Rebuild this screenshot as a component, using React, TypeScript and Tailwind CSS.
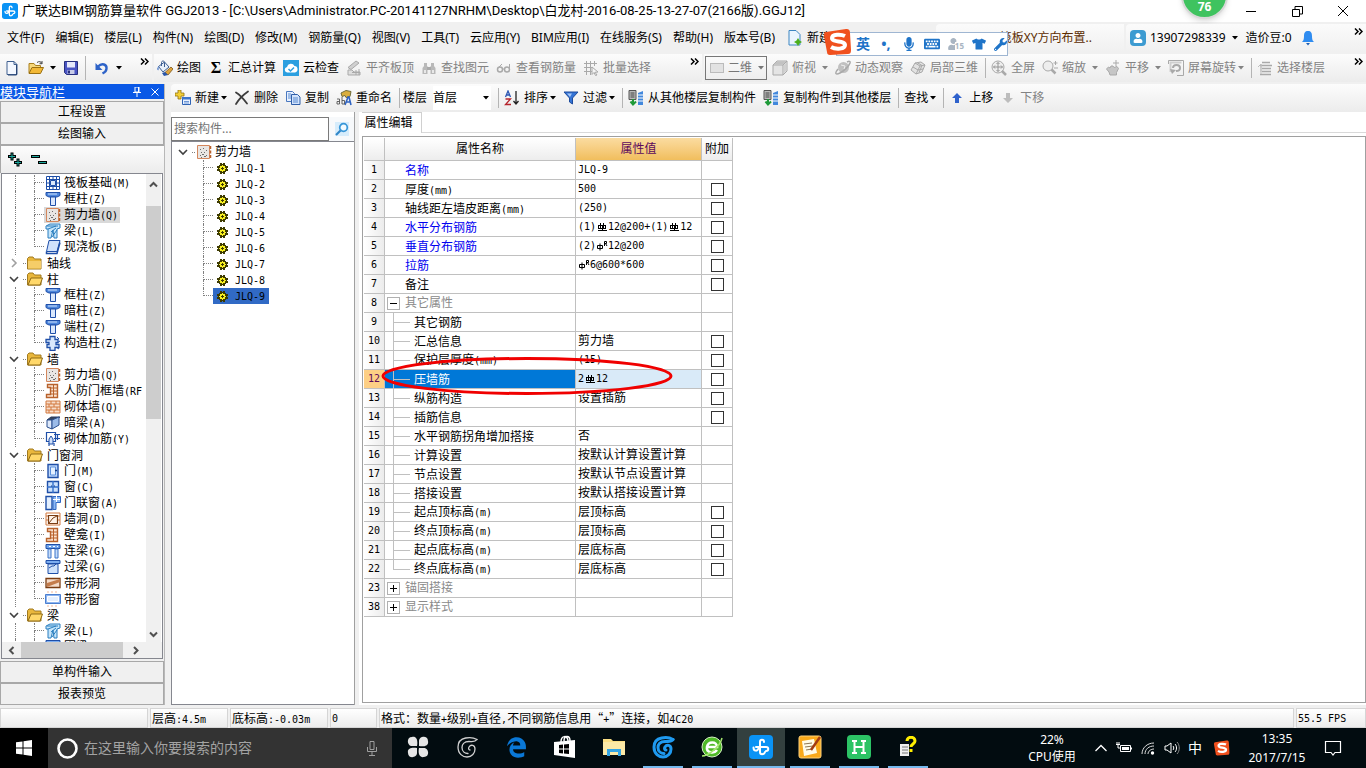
import React from "react";
import type { ReactNode } from "react";
import { FaKeyboard, FaMicrophone, FaTshirt, FaWrench, FaUser, FaEdgeLegacy } from "react-icons/fa";

/* ---------- text helpers ---------- */

// Song-style text: half-width characters take exactly half of a 12px ideograph.
function Song({ children }: { children: string }) {
  const runs = children.match(/[\x20-\x7e]+|[^\x20-\x7e]+/g) ?? [];
  return (
    <>
      {runs.map((run, i) =>
        /^[\x20-\x7e]/.test(run) ? (
          <span key={i} className="whitespace-pre font-['DejaVu_Sans_Mono','Noto_Sans_CJK_SC',monospace] text-[10px]">
            {run}
          </span>
        ) : (
          <span key={i} className="font-['Noto_Sans_CJK_SC',sans-serif]">{run}</span>
        )
      )}
    </>
  );
}

/* ---------- icons ---------- */

function Svg({ children, size = 16, box = 16 }: { children: ReactNode; size?: number; box?: number }) {
  return (
    <svg width={size} height={size} viewBox={`0 0 ${box} ${box}`} fill="none" className="shrink-0" aria-hidden="true">
      {children}
    </svg>
  );
}

const AppLogo = ({ size = 16 }: { size?: number }) => (
  <Svg size={size} box={24}>
    <rect width="24" height="24" rx="4" fill="#0a93f5" />
    <path d="M15 7c0-3-4-3-4 0v10c0 3 4 3 5 0M4.500 12.500c0 4 4 4 5 1M7 12h10c3 0 3 4 0 4" stroke="#fff" strokeWidth="2" strokeLinecap="round" />
  </Svg>
);
const NewDoc = () => (
  <Svg>
    <path d="M3 1.500h7l3 3v10H3z" fill="#f4f8ff" stroke="#3f5f8f" />
    <path d="M10 1.500v3h3" stroke="#3f5f8f" />
    <path d="M12.500 5v10H4" stroke="#2b4674" />
  </Svg>
);
const OpenFolder = () => (
  <Svg>
    <path d="M1 13V3.500h5l1.500 2h5V8" fill="#f6d77a" stroke="#a97f1d" />
    <path d="M1 13.500l3-6h11.500l-3 6z" fill="#f2b836" stroke="#9a7012" />
    <path d="M9 2.500c2-1.500 4-1 5 1m0-2.500v2.700h-2.500" stroke="#444" />
  </Svg>
);
const Save = () => (
  <Svg>
    <path d="M1.500 1.500h13v13h-11l-2-2z" fill="#4a55c4" stroke="#28307e" />
    <path d="M4 2h8v5.500H4z" fill="#e6e9fb" />
    <path d="M4.500 10h7v4h-7z" fill="#c9cde8" />
    <path d="M5 10.500h2v3H5z" fill="#28307e" />
  </Svg>
);
const Undo = () => (
  <Svg>
    <path d="M4 6.500c4-4 9-2 8.500 2 0 2.500-2 4-4 5" stroke="#2e63c8" strokeWidth="2.400" />
    <path d="M1.500 3v7h7z" fill="#2e63c8" />
  </Svg>
);
const Paint = () => (
  <Svg>
    <path d="M1.500 6.500l6-4.500 4.500 5-6 5z" fill="#e8f0fa" stroke="#3d5e92" />
    <path d="M4.500 6V2.500c0-2 3-2 3 0V7" stroke="#3d5e92" />
    <path d="M1.500 6C-.5 9 .5 11 1.500 10z" fill="#2d66c4" />
    <path d="M8 12.500L14 7l2 2-5 6z" fill="#e0a43a" stroke="#7a561a" strokeWidth=".8" />
    <path d="M5 13l3-1 3 3-4 1z" fill="#2a56a8" />
  </Svg>
);
const CloudCheck = () => (
  <Svg>
    <rect width="16" height="16" fill="#2b9fe0" />
    <path d="M4 12.500a2.800 2.800 0 010-5.500A4 4 0 0111.500 6a3.300 3.300 0 01.500 6.500z" fill="#fff" />
    <path d="M5.500 9l2 2 3.500-3.500" stroke="#2b9fe0" strokeWidth="1.500" />
  </Svg>
);
const G = "#a9a9a9";
const AlignTop = () => (
  <Svg>
    <path d="M2 7.500L10 1l3 2-8 6.500z" fill="#d0d0d0" stroke={G} />
    <path d="M2 10h4l2 2h6v3H2z" fill="#dedede" stroke={G} />
    <path d="M6 12.500h8M10 10v5M13 9v6" stroke={G} />
  </Svg>
);
const Binoculars = () => (
  <Svg>
    <path d="M3 3h3v3H3zM10 3h3v3h-3zM1.500 8L3 6h3.500v8h-5zM9.500 6H13l1.500 2v6h-5z" fill="#b9b9b9" />
    <path d="M6 7h4v3H6z" fill={G} />
    <path d="M3 10h2v3H3zM11 10h2v3h-2z" fill="#e8e8e8" />
  </Svg>
);
const Glasses = () => (
  <Svg>
    <circle cx="4" cy="9.500" r="2.500" stroke={G} strokeWidth="1.500" />
    <circle cx="11" cy="9.500" r="2.500" stroke={G} strokeWidth="1.500" />
    <path d="M6.500 9h2M2 8l4-4M13.500 9V4" stroke={G} />
  </Svg>
);
const BatchSelect = () => (
  <Svg>
    <path d="M1 3.500h13M1 7.500h8M1 11.500h8M3.500 1v14M7.500 1v14M11.500 1v5" stroke={G} />
    <path d="M9 7l6 5-3 .300L14 15l-1.500.500-1.500-3-2 2z" fill="#f5f5f5" stroke={G} />
  </Svg>
);
const CubeIcon = () => (
  <Svg>
    <path d="M1 5l4-4h10v10l-4 4H1z" fill="#e4e4e4" stroke={G} />
    <path d="M1 5h10v10M11 5l4-4" stroke={G} />
    <path d="M1.500 4.500L5 1.500h9l-3 3z" fill="#c2c2c2" />
    <path d="M11.500 5.500l3-3v8l-3 3z" fill="#d0d0d0" />
  </Svg>
);
const OrbitIcon = () => (
  <Svg>
    <circle cx="8.500" cy="7.500" r="5.500" fill="#c0c0c0" />
    <path d="M3 9C-1 14 1 15 5 13 9 11 14 6 15 3c.500-2-1-2-3-1" stroke={G} strokeWidth="1.500" />
    <path d="M6 5l4 1-1 3" stroke="#eee" />
  </Svg>
);
const LocalCube = () => (
  <Svg>
    <path d="M1 10L5 3l6-1 4 3-3 7-6 2z" fill="#e2e2e2" stroke={G} />
    <path d="M5 3l5 3 5-1M10 6l-4 8M3 7l5 3 5-1M7 2.500l5 3-3 7" stroke={G} />
  </Svg>
);
const ZoomAll = () => (
  <Svg>
    <circle cx="7" cy="7" r="6" fill="#eee" stroke={G} />
    <path d="M11 11l4 4" stroke={G} strokeWidth="2.500" />
    <path d="M7 2.500v9M2.500 7h9M5.500 4L7 2.500 8.500 4M5.500 10L7 11.500 8.500 10M4 5.500L2.500 7 4 8.500M10 5.500L11.500 7 10 8.500" stroke="#949494" />
  </Svg>
);
const ZoomIcon = () => (
  <Svg>
    <circle cx="6" cy="6" r="5" fill="#eee" stroke={G} />
    <path d="M9.500 9.500l4 4" stroke={G} strokeWidth="2.500" />
    <path d="M11.500 3h4M13.500 1v4M12 8h4" stroke={G} />
  </Svg>
);
const PanIcon = () => (
  <Svg>
    <path d="M1.500 9l2-2 1.500 1 1-2h2l1 1.500 3-1 1.500 2-2 4V15H5l-1-3z" fill="#c6c6c6" stroke={G} />
    <path d="M11 0v6M8 3h6" stroke={G} />
  </Svg>
);
const ScreenRotate = () => (
  <Svg>
    <path d="M.5 4V.5h15v15H9" stroke={G} />
    <path d="M2.500 12V2.500h11" stroke="#cfcfcf" strokeWidth="2" />
    <path d="M5 8c0-4 7-4 7 0 0 2-2 3-4 3" stroke={G} strokeWidth="2" />
    <path d="M2 9l2 5 4-4z" fill={G} />
  </Svg>
);
const FloorSelect = () => (
  <Svg>
    <path d="M5 2.500h8M3 5.500h12M5 8.500h9M5 11.500h9M3 14.500h11" stroke={G} strokeWidth="1.500" />
    <path d="M1 7l3-3v8M4 14V4" stroke="#bdbdbd" />
  </Svg>
);
const AddComp = () => (
  <Svg>
    <path d="M3 0h3v3h3v3H6v3H3V6H0V3h3z" fill="#f3cf36" stroke="#8f7112" strokeWidth=".8" />
    <path d="M7.500 7.500h8v7h-8z" fill="#eaf2ff" stroke="#2f63b5" />
    <path d="M7 7h9v2.500H7z" fill="#3b74cc" />
    <path d="M9 11.500h5M9 13h5" stroke="#6f98d6" />
  </Svg>
);
const DeleteX = () => (
  <Svg>
    <path d="M2 2.500c5 3 8 7 11 11M14 1.500C9 5 5 9 2 14" stroke="#3c3c3c" strokeWidth="1.800" strokeLinecap="round" />
  </Svg>
);
const CopyIcon = () => (
  <Svg>
    <path d="M1.500 1.500h6l2 2v8h-8z" fill="#e6f0ff" stroke="#4a78bf" />
    <path d="M6.500 4.500h6l2.500 2.500v7.500H6.500z" fill="#d2e3fc" stroke="#2f5ea8" />
    <path d="M8 8h5M8 10h5M8 12h5M3 4h3M3 6h3M3 8h3" stroke="#5b8bd0" />
  </Svg>
);
const RenameIcon = () => (
  <Svg>
    <path d="M5 3l5-2.500 5 1-1 5-4 1-1-2-3 1z" fill="#d9ae3f" stroke="#6f6c3c" />
    <path d="M9 15l3-8h1l2 8M10.500 12h4" stroke="#2f63c2" strokeWidth="1.600" />
    <path d="M1 9h2.500v5H1v-2.500h2.500M6 7v7h2.500v-3.500H6" stroke="#555" strokeWidth=".9" />
  </Svg>
);
const SortIcon = () => (
  <Svg>
    <path d="M1.500 7l2.500-6 2.500 6M2.500 5h3" stroke="#2b56b3" strokeWidth="1.300" />
    <path d="M1.500 9h5l-5 5.500h5.500" stroke="#b5242c" strokeWidth="1.300" />
    <path d="M12 1v13M9.500 11l2.500 3 2.500-3" stroke="#222" strokeWidth="1.300" />
  </Svg>
);
const FilterIcon = () => (
  <Svg>
    <path d="M1 2h14l-5.500 6v6l-3-2V8z" fill="#3474d6" stroke="#1d4b9c" />
    <path d="M4 3.500h5L7 7z" fill="#a9c9f7" />
  </Svg>
);
const FloorCopy = () => (
  <Svg>
    <path d="M1 .5h7v9H1z" fill="#b9b9b9" stroke="#555" />
    <path d="M2.500 3h4M2.500 5h4M2.500 7h4" stroke="#444" />
    <path d="M10 3l5-2v14h-5z" fill="#4288dc" />
    <path d="M10 5h5M10 8h5M10 11h5" stroke="#fff" />
    <path d="M5 9v5M2.500 11.500L5 14.500l3-3" stroke="#1e9a38" strokeWidth="2" />
  </Svg>
);
const Arrow = ({ up, color }: { up?: boolean; color: string }) => (
  <Svg>
    <path d={up ? "M8 3l5 5h-3v5H6V8H3z" : "M8 13l5-5h-3V3H6v5H3z"} fill={color} />
  </Svg>
);
const Caret = ({ tight }: { tight?: boolean }) => (
  <span className={tight ? "flex w-2 justify-end" : "flex w-3 justify-end"}>
    <svg width="6" height="4" viewBox="0 0 6 4" aria-hidden="true">
      <path d="M0 0h6L3 3.500z" fill="currentColor" />
    </svg>
  </span>
);
const More = () => (
  <button type="button" aria-label="更多" className="flex h-2 w-3 shrink-0 items-start text-black">
    <svg width="9" height="7" viewBox="0 0 9 7" fill="none" aria-hidden="true">
      <path d="M1 .5l3 3-3 3M5 .5l3 3-3 3" stroke="currentColor" strokeWidth="1.500" />
    </svg>
  </button>
);
const Sep = () => <span className="-mr-0.5 h-5 w-px shrink-0 bg-[#b4b4b4]" />;

/* ---------- tree icons ---------- */

const B = "#1f4fa8";
const O = "#b8622c";
const treeIcons: Record<string, ReactNode> = {
  raft: <Svg><path d="M1.500 1.500h13v13h-13zM4.500 1v14M8 1v14M11.500 1v14M1 4.500h14M1 8h14M1 11.500h14" stroke={B} /><path d="M5.500 5.500h5v5h-5z" fill="#dce9fb" stroke={B} /></Svg>,
  column: <Svg><path d="M1 1.500h14v3l-3 1.500H4L1 4.500z" fill="#4d86dc" stroke={B} /><path d="M5.500 6h5v8.500h-5z" fill="#dbe8fc" stroke={B} /><path d="M3 3h9" stroke="#cfe1fb" /></Svg>,
  wall: <Svg><path d="M1.500 1.500h12v13h-12z" fill="#e9e6e3" stroke="#d4875d" /><path d="M14.500 2v3M14.500 6.500v3M14.500 11v3" stroke={O} strokeWidth="1.500" /><path d="M4 5.500h1M7 4.500h1M10 6.500h1M5 8.500h1M8 8.500h1M4 11.500h1M6 10.500h2M10 11.500h1M5 13.500h1M8 12.500h2" stroke="#6c6c6c" /></Svg>,
  beam: <Svg><path d="M1 3l4-2h10v4l-3 1v9H9l-1-8-2 8H3V6H1z" fill="#c5e5fa" stroke="#2a7fc0" /><path d="M3 6l8-3M6 9l5-4M7 14l5-7M2 3h11" stroke="#2a7fc0" /></Svg>,
  slab: <Svg><path d="M4 1.500h11l-3 11H1.500z" fill="#cfe1fb" stroke={B} /><path d="M1.500 12.500v2H12l3-11" stroke={B} strokeWidth="1.500" /></Svg>,
  struct: <Svg><path d="M5 1.500h5v3h3v3h-2v2h3v3h-4v3H5v-3H2v-3h2v-2H1v-3h4z" fill="#d9e8fc" stroke={B} strokeWidth="1.300" /><path d="M12 2l2 2M12 8l3-2M11 12l3 2" stroke={B} /></Svg>,
  frame: <Svg><path d="M2.500 1.500h10v13h-11v-3h4v-7h-3z" fill="#fbe3d0" stroke={O} strokeWidth="1.400" /><path d="M8.500 2v12M5 5h7M5 8h7M5 11h7" stroke={O} /></Svg>,
  brick: <Svg><path d="M1 2h14v12H1z" fill="#f7ddcb" stroke="#d2793f" /><path d="M1 5h14M1 8h14M1 11h14M6 2v3M11 2v3M4 5v3M9 5v3M6 8v3M12 8v3M4 11v3M9 11v3" stroke="#d2793f" /></Svg>,
  hidden: <Svg><path d="M2 5l4-3h9l-4 3z" fill="#35455f" stroke="#2a3d61" /><path d="M2 5h5v9l-5-2z" fill="#dfeafb" stroke="#2a4f8e" /><path d="M7 5l7-3v8l-7 4z" fill="#9bbbe8" stroke="#2a4f8e" /></Svg>,
  rebar: <Svg><path d="M1.500 1.500h9v9h-9zM9 3.500h6M9 7.500h6M4 12v3M9 12v3M12.500 3v6" stroke={B} strokeWidth="1.200" /><path d="M4 8l2-3 2 3v5H4z" fill="#cfe1fb" stroke={B} /></Svg>,
  door: <Svg><path d="M3 1.500h10v13H3z" fill="#bcd6fa" stroke={B} strokeWidth="1.400" /><path d="M5.500 4h5v8h-5z" fill="#e4f0ff" stroke="#5a8fdc" /><path d="M10 7.500h2" stroke="#123a80" strokeWidth="1.500" /></Svg>,
  window: <Svg><path d="M2.500 2.500h11v11h-11z" fill="#cce2fd" stroke={B} strokeWidth="1.400" /><path d="M8 2v12M2 8h12" stroke="#3470ca" strokeWidth="1.400" /><path d="M6 7h1M9 7h1" stroke="#123a80" /></Svg>,
  doorwin: <Svg><path d="M1 1.500h6v13H1z" fill="#e4f0ff" stroke={B} strokeWidth="1.400" /><path d="M8 1.500h7.500v6H11v7H8z" fill="#8cb8f4" stroke="#2f68c4" /><path d="M8 4.500h7M11.500 1v6" stroke="#fff" /></Svg>,
  hole: <Svg><path d="M1 2h14v12H1zM1 5h3M1 9h3M12 5h3M12 9h3" stroke="#d2793f" /><path d="M3.500 4.500h9v8h-9z" fill="#fff3e8" stroke="#7a3c12" strokeWidth="1.200" /><path d="M4 12l4-5 4-2" stroke="#7a3c12" /></Svg>,
  link: <Svg><path d="M1 1.500h14v4H1z" fill="#6fa4ec" stroke={B} /><path d="M3 6h3v9H3zM10 6h3v9h-3z" fill="#c5dcfa" stroke="#3d74c9" /><path d="M4 3.500h2M8 3.500h2M12 3.500h1" stroke="#fff" /></Svg>,
  lintel: <Svg><path d="M1 1.500h14v3H1z" fill="#7cadf0" stroke={B} /><path d="M3 5h10v9.500H3z" fill="#cfe2fb" stroke={B} /><path d="M4 9l3-2h2l3-3" stroke={B} /></Svg>,
  striphole: <Svg><path d="M1 3.500h14v9H1z" fill="#f4dccb" stroke="#7a3c12" strokeWidth="1.300" /><path d="M2 8l13-4v3L2 12z" fill="#c37c4c" /></Svg>,
  stripwin: <Svg><path d="M.5 3.500h15v9H.5z" fill="#8db4ef" stroke="#4a7fd0" /><path d="M2.500 5.500h11v5h-11z" fill="#e4efff" stroke="#fff" /><path d="M2 1h12M2 15h12" stroke="#f2b99b" strokeDasharray="2 2" /></Svg>,
};
const Folder = ({ open }: { open?: boolean }) => (
  <Svg>
    <path d="M.5 14V3.500L2 2h4l1.500 2H14v10z" fill="#e9b73c" stroke="#a17a20" />
    {open ? <path d="M1 14l3-7h11.500L13 14z" fill="#ffd86a" stroke="#8f6a15" /> : <path d="M1 6h13v7.500H1z" fill="#f5cd68" />}
  </Svg>
);
const Gear = () => (
  <svg width="11" height="11" viewBox="0 0 11 11" shapeRendering="crispEdges" className="shrink-0" aria-hidden="true">
    <path d="M3 0h2v1h1V0h2v2h1v1h2v2h-1v1h1v2H9v1H8v2H6v-1H5v1H3V9H2V8H0V6h1V5H0V3h2V2h1z" fill="#3d3a00" />
    <path d="M3 3h2V2h1v1h2v2h1v1H8v2H6v1H5V8H3V6H2V5h1z" fill="#f8f020" />
    <path d="M5 4h1v1h1v1H6v1H5V6H4V5h1z" fill="#3d3a00" />
  </svg>
);
const Chevron = ({ open }: { open: boolean }) => (
  <svg width="10" height="10" viewBox="0 0 10 10" fill="none" aria-hidden="true">
    <path d={open ? "M1 3l4 4 4-4" : "M3 1l4 4-4 4"} stroke={open ? "#404040" : "#a0a0a0"} strokeWidth="1.600" />
  </svg>
);

/* ---------- title and menu ---------- */

function TitleBar() {
  return (
    <header className="relative flex h-[22px] shrink-0 items-center bg-white pl-0.5">
      <AppLogo />
      <h1 className="ml-1 font-['Roboto','Noto_Sans_CJK_SC',sans-serif] text-[13px] font-normal leading-5">
        广联达BIM钢筋算量软件 GGJ2013 - [C:\Users\Administrator.PC-20141127NRHM\Desktop\白龙村-2016-08-25-13-27-07(2166版).GGJ12]
      </h1>
      <div className="absolute -top-7 left-[1181px] flex h-[47px] w-[47px] items-end justify-center rounded-full border-2 border-[#d8d8d8] bg-[#3fc35f] pb-1 text-xs font-bold leading-3 text-white shadow-md">76</div>
      <div className="ml-auto flex">
        <button type="button" aria-label="最小化" className="flex h-5 w-[46px] items-center justify-center"><Svg size={10} box={10}><path d="M0 5.500h10" stroke="#000" /></Svg></button>
        <button type="button" aria-label="还原" className="flex h-5 w-[46px] items-center justify-center"><Svg size={11} box={11}><path d="M.5 3.500h7v7h-7zM3 3.500v-3h7.500V8H8" stroke="#000" /></Svg></button>
        <button type="button" aria-label="关闭" className="flex h-5 w-[46px] items-center justify-center"><Svg size={10} box={10}><path d="M0 0l10 10M10 0L0 10" stroke="#000" /></Svg></button>
      </div>
    </header>
  );
}

const menus = ["文件(F)", "编辑(E)", "楼层(L)", "构件(N)", "绘图(D)", "修改(M)", "钢筋量(Q)", "视图(V)", "工具(T)", "云应用(Y)", "BIM应用(I)", "在线服务(S)", "帮助(H)", "版本号(B)"];

function MenuBar() {
  return (
    <nav className="relative flex h-8 shrink-0 items-center pl-[7px]">
      <div className="flex gap-[11px]">
        {menus.map((m) => (
          <button key={m} type="button" className="leading-6">{m}</button>
        ))}
      </div>
      <button type="button" className="ml-3 flex items-center gap-1">
        <Svg><path d="M2 .5h7l4 4V15H2z" fill="#eaf5ff" stroke="#3c86c2" /><path d="M11 8l1.500 2.500L15 12l-2.500 1.500L11 16l-1.500-2.500L7 12l2.500-1.500z" fill="#4caf1e" /></Svg>
        新建
      </button>
      <div className="ml-auto flex h-7 w-[188px] items-center justify-end rounded-tl bg-gradient-to-b from-[#fbfbfb] to-[#f0f0f0] pr-8 text-[#5c2c00]">筏板XY方向布置..</div>
      <div className="ml-0.5 flex h-7 w-[240px] items-center rounded-tl bg-gradient-to-b from-[#fbfbfb] to-[#f0f0f0] pl-1">
        <span className="flex h-4 w-4 items-center justify-center rounded-sm bg-[#3d9bd1] text-white"><FaUser size={10} /></span>
        <button type="button" className="ml-1 flex items-center">13907298339<Caret /></button>
        <span className="ml-2">造价豆:0</span>
        <span className="ml-2"><Svg><path d="M8 1c-3 0-4 2-4 5 0 4-1 5-2 6h12c-1-1-2-2-2-6 0-3-1-5-4-5z" fill="#2f8cf0" /><path d="M6 13h4l-2 2.500z" fill="#1b5fb5" /></Svg></span>
        <span className="ml-auto self-start pt-1"><More /></span>
      </div>
      <div className="absolute left-[824px] top-1.5 flex h-8 items-center" aria-label="输入法">
        <div className="ml-3 flex h-6 w-[172px] items-center gap-2 border border-[#9fb6d2] bg-white pl-[19px] text-[#1f74c8]">
          <b className="text-sm">英</b>
          <b className="w-4 text-center text-sm">•,</b>
          <FaMicrophone size={14} />
          <FaKeyboard size={16} />
          <span className="flex w-4 items-end text-[#a9b5c2]"><FaUser size={12} /><b className="-ml-1 bg-white text-[8px] leading-2">15</b></span>
          <FaTshirt size={14} />
          <FaWrench size={13} />
        </div>
        <div className="absolute left-0 top-0"><SLogo size={28} /></div>
      </div>
    </nav>
  );
}

const SLogo = ({ size }: { size: number }) => (
  <Svg size={size} box={28}>
    <path d="M2 4l20-3c3 0 4 1 4 4l1 17c0 3-1 4-3 4L6 27c-2 0-3-1-3-3L0 8c0-2 0-4 2-4z" fill="#f0501e" />
    <path d="M21 8c-4-2-13-2-13 2 0 5 13 2 13 7 0 4-9 5-14 2" stroke="#fff" strokeWidth="4" />
  </Svg>
);

/* ---------- toolbars ---------- */

function Tool({ icon, label, caret, off }: { icon?: ReactNode; label: string; caret?: "wide" | "tight"; off?: boolean }) {
  return (
    <button type="button" disabled={off} className={off ? "flex shrink-0 items-center text-[#838383]" : "flex shrink-0 items-center text-black"}>
      {icon && <span className="mr-1 flex w-4 justify-center">{icon}</span>}
      {label}
      {caret && <Caret tight={caret === "tight"} />}
    </button>
  );
}

const barCls = "bg-gradient-to-b from-[#fcfcfc] to-[#ececec]";

function ToolbarMain() {
  return (
    <div className="flex h-7 shrink-0 gap-0.5">
      <div className={`flex w-[152px] shrink-0 items-center pl-1 ${barCls}`}>
        <button type="button" aria-label="新建"><NewDoc /></button>
        <button type="button" aria-label="打开" className="ml-2 flex items-center"><OpenFolder /><Caret /></button>
        <button type="button" aria-label="保存" className="ml-[7px]"><Save /></button>
        <span className="ml-1.5 h-6 w-px bg-[#b4b4b4]" />
        <button type="button" aria-label="撤销" className="ml-2 flex items-center"><Undo /><Caret /></button>
        <span className="ml-auto self-start pt-1"><More /></span>
      </div>
      <div className={`flex w-[548px] shrink-0 items-center gap-[7px] pl-[3px] ${barCls}`}>
        <Tool icon={<Paint />} label="绘图" />
        <Tool icon={<b className="font-['Liberation_Serif',serif] text-base leading-4">Σ</b>} label="汇总计算" />
        <Tool icon={<CloudCheck />} label="云检查" />
        <Tool off icon={<AlignTop />} label="平齐板顶" />
        <Tool off icon={<Binoculars />} label="查找图元" />
        <Tool off icon={<Glasses />} label="查看钢筋量" />
        <Tool off icon={<BatchSelect />} label="批量选择" />
        <span className="ml-auto self-start pt-1"><More /></span>
      </div>
      <div className={`flex min-w-0 flex-1 items-center gap-[7px] pl-px ${barCls}`}>
        <label className="-mr-0.5 flex h-6 w-[62px] shrink-0 items-center border border-[#777] pl-1 text-[#777]">
          <span className="mr-1 h-2.5 w-3.5 border border-[#bbb] bg-[#e2e2e2]" />
          <select aria-label="视图维度" className="w-6 appearance-none bg-transparent"><option>二维</option></select>
          <Caret />
        </label>
        <Tool off icon={<CubeIcon />} label="俯视" caret="wide" />
        <Tool off icon={<OrbitIcon />} label="动态观察" />
        <Tool off icon={<LocalCube />} label="局部三维" />
        <Sep />
        <Tool off icon={<ZoomAll />} label="全屏" />
        <Tool off icon={<ZoomIcon />} label="缩放" caret="wide" />
        <Tool off icon={<PanIcon />} label="平移" caret="wide" />
        <Tool off icon={<ScreenRotate />} label="屏幕旋转" caret="tight" />
        <Sep />
        <Tool off icon={<FloorSelect />} label="选择楼层" />
        <span className="ml-auto self-start pt-1"><More /></span>
      </div>
    </div>
  );
}

function ToolbarComponent() {
  return (
    <div className={`flex h-7 shrink-0 items-center gap-[7px] rounded-tl pl-1 ${barCls}`}>
      <Tool icon={<AddComp />} label="新建" caret="tight" />
      <Tool icon={<DeleteX />} label="删除" />
      <Tool icon={<CopyIcon />} label="复制" />
      <Tool icon={<RenameIcon />} label="重命名" />
      <Sep />
      <label className="-ml-0.5 flex items-center gap-1.5">
        楼层
        <span className="flex h-6 w-[58px] items-center bg-white">
          <select aria-label="楼层" className="w-11 appearance-none bg-transparent"><option>首层</option></select>
          <Caret />
        </span>
      </label>
      <Sep />
      <Tool icon={<SortIcon />} label="排序" caret="tight" />
      <Tool icon={<FilterIcon />} label="过滤" caret="tight" />
      <Sep />
      <Tool icon={<FloorCopy />} label="从其他楼层复制构件" />
      <Tool icon={<FloorCopy />} label="复制构件到其他楼层" />
      <Sep />
      <Tool label="查找" caret="tight" />
      <Sep />
      <Tool icon={<Arrow up color="#2f62cc" />} label="上移" />
      <Tool off icon={<Arrow color="#bdbdbd" />} label="下移" />
    </div>
  );
}

/* ---------- left navigation ---------- */

type Node = { label: string; icon?: string; open?: boolean; last?: boolean; active?: boolean };
const nodes: Node[] = [
  { label: "筏板基础(M)", icon: "raft" },
  { label: "框柱(Z)", icon: "column" },
  { label: "剪力墙(Q)", icon: "wall", active: true },
  { label: "梁(L)", icon: "beam" },
  { label: "现浇板(B)", icon: "slab", last: true },
  { label: "轴线", open: false },
  { label: "柱", open: true },
  { label: "框柱(Z)", icon: "column" },
  { label: "暗柱(Z)", icon: "column" },
  { label: "端柱(Z)", icon: "column" },
  { label: "构造柱(Z)", icon: "struct", last: true },
  { label: "墙", open: true },
  { label: "剪力墙(Q)", icon: "wall" },
  { label: "人防门框墙(RF", icon: "frame" },
  { label: "砌体墙(Q)", icon: "brick" },
  { label: "暗梁(A)", icon: "hidden" },
  { label: "砌体加筋(Y)", icon: "rebar", last: true },
  { label: "门窗洞", open: true },
  { label: "门(M)", icon: "door" },
  { label: "窗(C)", icon: "window" },
  { label: "门联窗(A)", icon: "doorwin" },
  { label: "墙洞(D)", icon: "hole" },
  { label: "壁龛(I)", icon: "frame" },
  { label: "连梁(G)", icon: "link" },
  { label: "过梁(G)", icon: "lintel" },
  { label: "带形洞", icon: "striphole" },
  { label: "带形窗", icon: "stripwin", last: true },
  { label: "梁", open: true },
  { label: "梁(L)", icon: "beam" },
  { label: "圈梁(E)", icon: "lintel" },
];

const Branch = ({ last }: { last?: boolean }) => (
  <span className="flex h-4 w-2.5 shrink-0 flex-col">
    <span className="h-2 border-b border-l border-dotted border-[#808080]" />
    <span className={last ? "h-2" : "h-2 border-l border-dotted border-[#808080]"} />
  </span>
);

function NavTree() {
  return (
    <ul className="min-w-0 flex-1 overflow-hidden pt-px">
      {nodes.map((n, i) =>
        n.icon ? (
          <li key={i} className="flex h-4 items-center whitespace-nowrap">
            <span className="ml-[13px] h-4 w-[19px] shrink-0 border-l border-dotted border-[#808080]" />
            <Branch last={n.last} />
            <span className={n.active ? "flex h-4 items-center gap-px bg-[#d9d9d9] pl-px" : "flex h-4 items-center gap-px pl-px"}>
              {treeIcons[n.icon]}
              <span className="px-0.5 leading-4"><Song>{n.label}</Song></span>
            </span>
          </li>
        ) : (
          <li key={i} className="flex h-4 items-center whitespace-nowrap pl-[7px]">
            <button type="button" aria-label={n.label} aria-expanded={n.open}><Chevron open={!!n.open} /></button>
            <span className="ml-1 mr-px h-px w-[3px] border-b border-dotted border-[#808080]" />
            <Folder open={n.open} />
            <span className="ml-1 leading-4"><Song>{n.label}</Song></span>
          </li>
        )
      )}
    </ul>
  );
}

const ScrollArrow = ({ d }: { d: string }) => (
  <svg width="9" height="9" viewBox="0 0 9 9" fill="none" aria-hidden="true"><path d={d} stroke="#505050" strokeWidth="2" /></svg>
);

const navBtn = "h-[22px] shrink-0 border border-[#a8a8a8] bg-[#f0f0f0] leading-5";

function NavPanel() {
  return (
    <aside className="flex w-[165px] shrink-0 flex-col border-r border-[#b8b8b8]">
      <div className="mb-0.5 flex h-[15px] shrink-0 items-center bg-[#0a58e6] pr-1 text-[13px] leading-4 text-white">
        <h2>模块导航栏</h2>
        <button type="button" aria-label="固定" className="ml-auto"><Svg size={10} box={10}><path d="M3 0h4v5H3zM1 5.500h8M5 6v4M6.500 0v5" stroke="#fff" /></Svg></button>
        <button type="button" aria-label="关闭" className="ml-2"><Svg size={10} box={10}><path d="M1.500 1.500l7 7M8.500 1.500l-7 7" stroke="#fff" /></Svg></button>
      </div>
      <button type="button" className={navBtn}>工程设置</button>
      <button type="button" className={navBtn}>绘图输入</button>
      <div className={`flex h-7 shrink-0 items-center gap-2 border-l border-t border-[#a8a8a8] pl-1.5 ${barCls}`}>
        <button type="button" aria-label="全部展开"><Svg><path d="M1 4.500h8M5 .5v8M7 10.500h8M11 6.500v8" stroke="#000" strokeWidth="3" /><path d="M2 4.500h6M5 1.500v6M8 10.500h6M11 7.500v6" stroke="#1aa79c" /></Svg></button>
        <button type="button" aria-label="全部折叠"><Svg><path d="M0 4.500h9M7 10.500h9" stroke="#000" strokeWidth="3" /><path d="M1 4.500h7M8 10.500h7" stroke="#1aa79c" /></Svg></button>
      </div>
      <div className="mx-px flex min-h-0 flex-1 flex-col border border-[#85878f] bg-white">
        <div className="flex min-h-0 flex-1">
          <NavTree />
          <div className="mr-px flex w-[15px] shrink-0 flex-col items-center bg-[#f0f0f0]">
            <span className="flex h-8 items-center pb-3"><ScrollArrow d="M1 6.500L4.500 3 8 6.500" /></span>
            <span className="h-[213px] w-full bg-[#cdcdcd]" />
            <span className="mt-auto flex h-4 items-center"><ScrollArrow d="M1 2.500L4.500 6 8 2.500" /></span>
          </div>
        </div>
        <div className="flex h-4 shrink-0 items-center bg-[#f0f0f0]">
          <span className="flex w-[19px] justify-center"><ScrollArrow d="M6.500 1L3 4.500 6.500 8" /></span>
          <span className="h-4 w-[102px] bg-[#cdcdcd]" />
          <span className="ml-2"><ScrollArrow d="M3 1l3.500 3.500L3 8" /></span>
        </div>
      </div>
      <button type="button" className={`mt-0.5 ${navBtn}`}>单构件输入</button>
      <button type="button" className={navBtn}>报表预览</button>
    </aside>
  );
}

/* ---------- component list ---------- */

const comps = ["JLQ-1", "JLQ-2", "JLQ-3", "JLQ-4", "JLQ-5", "JLQ-6", "JLQ-7", "JLQ-8", "JLQ-9"];

function ComponentList() {
  return (
    <section className="flex w-[184px] shrink-0 flex-col border-r border-[#a0a0a0] bg-white">
      <div className="mt-[5px] flex h-6 shrink-0">
        <input type="search" aria-label="搜索构件" placeholder="搜索构件..." className="w-[158px] border border-[#7a7a7a] px-0.5 placeholder:text-[#757575]" />
        <button type="button" aria-label="搜索" className="flex flex-1 items-center justify-center bg-[#f7f9fb]">
          <Svg><rect x="1" y="1" width="14" height="14" fill="#d6ecfb" /><circle cx="9.500" cy="6.500" r="3.800" fill="#f2faff" stroke="#3796d8" strokeWidth="1.700" /><path d="M6.500 9.500L2 14" stroke="#2f86c8" strokeWidth="2.200" /></Svg>
        </button>
      </div>
      <div className="flex-1 border border-r-0 border-[#85878f]">
        <div className="mt-0.5 flex h-4 items-center pl-1.5">
          <button type="button" aria-label="剪力墙" aria-expanded="true"><Chevron open /></button>
          <span className="ml-1 mr-px h-px w-[3px] border-b border-dotted border-[#808080]" />
          {treeIcons.wall}
          <span className="ml-[3px] leading-4">剪力墙</span>
        </div>
        <ul>
          {comps.map((c, i) => (
            <li key={c} className="flex h-4 items-center pl-[31px]">
              <Branch last={i === comps.length - 1} />
              <span className={i === 8 ? "flex h-4 items-center gap-[7px] bg-[#316ac5] px-1" : "flex h-4 items-center gap-[7px] px-1"}>
                <Gear />
                <span className="leading-4"><Song>{c}</Song></span>
              </span>
            </li>
          ))}
        </ul>
      </div>
    </section>
  );
}

/* ---------- property table ---------- */

const RebarC = () => (
  <svg width="12" height="10" viewBox="0 0 12 10" fill="none" role="img" aria-label="三级钢" shapeRendering="crispEdges" className="shrink-0">
    <path d="M2.500 3.500h7v3h-7zM4.500 1v6M7.500 1v6M6 3v6M1.500 8.500h9" stroke="currentColor" />
  </svg>
);
const RebarR = () => (
  <svg width="12" height="12" viewBox="0 0 12 12" fill="none" role="img" aria-label="冷轧带肋钢" className="shrink-0">
    <path d="M1.500 5.500h5v3h-5zM4 3.500v7" stroke="currentColor" />
    <path d="M8.500 6V1.500h2v2h-2M9.500 3.500L11 6" stroke="currentColor" />
  </svg>
);

type Row = { n: number; name: string; value?: ReactNode; check?: boolean; kind?: "blue" | "plus" | "minus" | "child" };
const rows: Row[] = [
  { n: 1, name: "名称", value: <Song>JLQ-9</Song>, kind: "blue" },
  { n: 2, name: "厚度(mm)", value: <Song>500</Song>, check: true },
  { n: 3, name: "轴线距左墙皮距离(mm)", value: <Song>(250)</Song>, check: true },
  { n: 4, name: "水平分布钢筋", value: <><Song>(1)</Song><RebarC /><Song>12@200+(1)</Song><RebarC /><Song>12</Song></>, check: true, kind: "blue" },
  { n: 5, name: "垂直分布钢筋", value: <><Song>(2)</Song><RebarR /><Song>12@200</Song></>, check: true, kind: "blue" },
  { n: 6, name: "拉筋", value: <><RebarR /><Song>6@600*600</Song></>, check: true, kind: "blue" },
  { n: 7, name: "备注", check: true },
  { n: 8, name: "其它属性", kind: "minus" },
  { n: 9, name: "其它钢筋", kind: "child" },
  { n: 10, name: "汇总信息", value: "剪力墙", check: true, kind: "child" },
  { n: 11, name: "保护层厚度(mm)", value: <Song>(15)</Song>, check: true, kind: "child" },
  { n: 12, name: "压墙筋", value: <><Song>2</Song><RebarC /><Song>12</Song></>, check: true, kind: "child" },
  { n: 13, name: "纵筋构造", value: "设置插筋", check: true, kind: "child" },
  { n: 14, name: "插筋信息", check: true, kind: "child" },
  { n: 15, name: "水平钢筋拐角增加搭接", value: "否", kind: "child" },
  { n: 16, name: "计算设置", value: "按默认计算设置计算", kind: "child" },
  { n: 17, name: "节点设置", value: "按默认节点设置计算", kind: "child" },
  { n: 18, name: "搭接设置", value: "按默认搭接设置计算", kind: "child" },
  { n: 19, name: "起点顶标高(m)", value: "层顶标高", check: true, kind: "child" },
  { n: 20, name: "终点顶标高(m)", value: "层顶标高", check: true, kind: "child" },
  { n: 21, name: "起点底标高(m)", value: "层底标高", check: true, kind: "child" },
  { n: 22, name: "终点底标高(m)", value: "层底标高", check: true, kind: "child" },
  { n: 23, name: "锚固搭接", kind: "plus" },
  { n: 38, name: "显示样式", kind: "plus" },
];

const line = "border-b border-r border-[#c0c0c0]";

function NameCell({ row }: { row: Row }) {
  if (row.kind === "child") {
    return (
      <div className="flex h-[18px] items-center">
        <span className="ml-2 flex h-[18px] w-[17px] shrink-0 flex-col self-start">
          <span className="h-[10px] border-b border-l border-[#c0c0c0]" />
          <span className={row.n === 22 ? "h-2" : "h-2 border-l border-[#c0c0c0]"} />
        </span>
        <span className="ml-1 leading-[18px]"><Song>{row.name}</Song></span>
      </div>
    );
  }
  if (row.kind === "plus" || row.kind === "minus") {
    return (
      <div className="flex h-[18px] items-center pl-0.5 text-[#8a8a8a]">
        <button type="button" aria-label={row.name} className="mr-[5px] flex h-[13px] w-[13px] items-center justify-center border border-[#b0b0b0] text-black">
          <Svg size={7} box={7}><path d={row.kind === "plus" ? "M0 3.500h7M3.500 0v7" : "M0 3.500h7"} stroke="currentColor" /></Svg>
        </button>
        <span className="leading-[18px]">{row.name}</span>
      </div>
    );
  }
  return (
    <div className={row.kind === "blue" ? "h-[18px] pl-5 leading-[18px] text-[#0000f0]" : "h-[18px] pl-5 leading-[18px]"}>
      <Song>{row.name}</Song>
    </div>
  );
}

function PropertyTable() {
  return (
    <div className="relative w-[369px]">
      <table className="w-full table-fixed border-separate border-spacing-0">
        <colgroup>
          <col className="w-[21px]" />
          <col className="w-[191px]" />
          <col className="w-[126px]" />
          <col className="w-[31px]" />
        </colgroup>
        <thead>
          <tr className="h-[23px] bg-gradient-to-b from-white to-[#ececec]">
            <th className={`p-0 ${line}`} />
            <th className={`p-0 font-normal ${line}`}>属性名称</th>
            <th className={`bg-gradient-to-b from-[#fbdca0] to-[#f1be5c] p-0 font-normal text-[#5c0a5c] ${line}`}>属性值</th>
            <th className={`p-0 font-normal ${line}`}>附加</th>
          </tr>
        </thead>
        <tbody>
          {rows.map((r) => {
            const sel = r.n === 12;
            return (
              <tr key={r.n} className="h-[19px]">
                <th scope="row" className={`p-0 font-normal ${sel ? "bg-[#fdcf85] text-[#5c0a5c]" : "bg-gradient-to-r from-white to-[#ececec]"} ${line}`}>
                  <div className="flex h-[18px] items-center justify-center"><Song>{String(r.n)}</Song></div>
                </th>
                <td className={`p-0 ${sel ? "bg-[#0078d7] text-white" : ""} ${line}`}><NameCell row={r} /></td>
                <td className={`p-0 ${sel ? "bg-[#d9eaf8]" : ""} ${line}`}>
                  <div className="flex h-[18px] items-center whitespace-nowrap pl-0.5">{r.value}</div>
                </td>
                <td className={`p-0 ${line}`}>
                  {r.check && <input type="checkbox" aria-label={`附加 ${r.name}`} className="mx-auto block h-[13px] w-[13px] appearance-none border border-[#333] bg-white" />}
                </td>
              </tr>
            );
          })}
        </tbody>
      </table>
      <svg width="292" height="40" viewBox="0 0 292 40" fill="none" className="pointer-events-none absolute left-[17px] top-[218px]" aria-hidden="true">
        <ellipse cx="146" cy="20" rx="144" ry="17.500" stroke="#f00000" strokeWidth="3" />
      </svg>
    </div>
  );
}

function PropertyEditor() {
  return (
    <section className="ml-1 flex min-w-0 flex-1 flex-col bg-white pl-[3px]">
      <div className="flex h-[21px] shrink-0 items-end" role="tablist">
        <button type="button" role="tab" aria-selected="true" className="h-[21px] w-[60px] border-r border-t border-[#d0d0d0] pr-1.5 leading-5">属性编辑</button>
        <span className="flex-1 border-b border-[#d9d9d9]" />
      </div>
      <div className="mb-0.5 mt-[3px] flex-1 border border-[#a0a0a0] pl-px pt-px">
        <PropertyTable />
      </div>
    </section>
  );
}

/* ---------- status bar and task bar ---------- */

const cell = "border border-[#d5d5d5] bg-gradient-to-b from-white to-[#ececec] pl-px leading-[18px]";

function StatusBar() {
  return (
    <footer className="flex h-[20px] shrink-0 gap-0.5">
      <div className={`w-[148px] ${cell}`} />
      <div className={`w-[78px] ${cell}`}><Song>层高:4.5m</Song></div>
      <div className={`w-[98px] ${cell}`}><Song>底标高:-0.03m</Song></div>
      <div className={`w-[47px] ${cell}`}><Song>0</Song></div>
      <div className={`min-w-0 flex-1 ${cell}`}><Song>{"格式：数量+级别+直径,不同钢筋信息用“+”连接，如4C20"}</Song></div>
      <div className={`w-[70px] ${cell}`}><Song>55.5 FPS</Song></div>
    </footer>
  );
}

const GSwirl = ({ color, w }: { color: string; w: number }) => (
  <Svg size={24} box={24}>
    <path d="M22 4.500C17 1.500 3 1 3 12c0 7 5 10 9 10 5 0 8-4 8-8 0-4-4-5-6-2-1 2 0 3 1 3" stroke={color} strokeWidth={w} strokeLinecap="round" />
    <path d="M22 4.500c-2 3-5 2-8 2-5 0-7 3-7 6 0 4 3 6 6 6" stroke={color} strokeWidth={w} strokeLinecap="round" />
  </Svg>
);

const apps: { name: string; icon: ReactNode; run?: boolean; active?: boolean }[] = [
  { name: "四叶草", icon: <Svg size={22} box={22}><path d="M10 10H5C0 10-1 1 5 1c5-1 6 4 5 9zM12 10V5c0-5 9-6 9 0 1 5-4 6-9 5zM12 12h5c5 0 6 9 0 9-5 1-6-4-5-9zM10 12v5c0 5-9 6-9 0-1-5 4-6 9-5z" fill="#e6e6e6" /></Svg> },
  { name: "浏览器G", icon: <GSwirl color="#d0d0d0" w={1.3} /> },
  { name: "Edge", icon: <FaEdgeLegacy size={21} color="#0a78d7" /> },
  { name: "应用商店", icon: <Svg size={24} box={24}><path d="M1 7l21-2v18L1 20z" fill="#fff" /><path d="M8 7c0-7 7-7 7-1M11 6c0-6 6-6 6 0" stroke="#fff" strokeWidth="1.500" /><path d="M6 10l4-.500v4H6zM11 9.500l5-.500v4.500h-5zM6 14.500h4v4l-4-.500zM11 14.500h5V19l-5-.500z" fill="#000" /></Svg> },
  { name: "文件资源管理器", icon: <Svg size={24} box={24}><path d="M1 4h8l2 2h12v14H1z" fill="#fbdf84" /><path d="M1 7h22v13H1z" fill="#fce9a6" /><path d="M5 21v-7h14v7h-3v-4H8v4z" fill="#33a4e4" /></Svg> },
  { name: "广联达", run: true, icon: <GSwirl color="#1f9af0" w={3} /> },
  { name: "浏览器", run: true, icon: <Svg size={24} box={24}><circle cx="12" cy="12" r="10" fill="#4fb928" stroke="#d6f0c4" /><path d="M7 12h10c0-6-9-6-10 0s7 7 10 3" stroke="#fff" strokeWidth="2.600" /><path d="M2 21C8 21 20 12 22 3" stroke="#a5e66f" strokeWidth="1.500" /></Svg> },
  { name: "钢筋算量", run: true, active: true, icon: <AppLogo size={24} /> },
  { name: "记事", run: true, icon: <Svg size={24} box={24}><rect x="1" y="1" width="22" height="22" rx="2" fill="#f9a91b" stroke="#ffd27c" /><path d="M4 6l12-2 3 14-13 3z" fill="#fffbe8" /><path d="M6 9l8-1M7 12l8-1M8 15l6-1" stroke="#8d7755" /><path d="M22 2l-9 13" stroke="#a33b12" strokeWidth="2.500" /></Svg> },
  { name: "绿色H", run: true, icon: <Svg size={24} box={24}><rect width="24" height="24" rx="4" fill="#2cc365" /><path d="M5 6h5M7.500 6v12M5 18h5M14 6h5M16.500 6v12M14 18h5M8 12h8" stroke="#fff" strokeWidth="2" /></Svg> },
  { name: "帮助", run: true, icon: <Svg size={22} box={22}><path d="M3 8h9v12H3z" fill="#eee" /><path d="M5 11h6M5 14h6M5 17h6" stroke="#777" /><path d="M10 5c0-5 8-5 8 0 0 3-4 3-4 6M14 13v3" stroke="#ffee00" strokeWidth="3" /></Svg> },
];

function TaskBar() {
  return (
    <div className="flex h-10 shrink-0 items-center bg-[#020c10] text-white">
      <button type="button" aria-label="开始" className="flex h-10 w-12 items-center justify-center bg-black">
        <Svg><path d="M0 2.300L6.500 1.400v6.100H0zM7.500 1.200L16 0v7.500H7.500zM0 8.500h6.500v6.100L0 13.700zM7.500 8.500H16V16l-8.500-1.200z" fill="#fff" /></Svg>
      </button>
      <label className="flex h-10 w-[344px] items-center bg-[#333] pl-2 pr-3">
        <Svg size={23} box={23}><circle cx="11.500" cy="11.500" r="9" stroke="#fff" strokeWidth="2.600" /></Svg>
        <input type="text" placeholder="在这里输入你要搜索的内容" aria-label="搜索" className="ml-[5px] min-w-0 flex-1 bg-transparent text-sm placeholder:text-[#a3a3a3]" />
        <Svg><path d="M6 1.500h4v8H6zM3.500 7v4.500h9V7M8 12v3.500M5 15.500h6" stroke="#a0a0a0" /></Svg>
      </label>
      <div className="ml-0.5 flex gap-px">
        {apps.map((a) => (
          <button key={a.name} type="button" aria-label={a.name} className={`flex h-10 w-12 flex-col items-center ${a.active ? "bg-[#33403f]" : ""}`}>
            <span className="flex h-[38px] items-center">{a.icon}</span>
            {a.run && <span className={a.active ? "h-0.5 w-full bg-[#76b9ed]" : "h-0.5 w-10 bg-[#76b9ed]"} />}
          </button>
        ))}
      </div>
      <div className="ml-auto w-20 text-center leading-[17px]">22%<br />CPU使用</div>
      <div className="flex items-center gap-2 pl-0.5">
        <Svg size={14} box={14}><path d="M1.500 10L7 4.500l5.500 5.500" stroke="#fff" strokeWidth="1.300" /></Svg>
        <Svg><path d="M4.500 5.500h10v6h-10zM15.500 7.500v2M0 4.500h4M1 2v2M3 2v2M2 5v3h3" stroke="#fff" /><path d="M6 7h7v3H6z" fill="#fff" /></Svg>
        <Svg><path d="M2 14C2 8 7 3 14 3M5 14c0-5 4-8 9-8M8 14c0-3 3-5 6-5" stroke="#ddd" /><circle cx="12.500" cy="13" r="1.700" fill="#fff" /></Svg>
        <Svg><path d="M1 6h2l4-3v10L3 10H1zM9 6c1 1 1 3 0 4M11 4c2 2 2 6 0 8" stroke="#fff" /><path d="M13 2c3 3 3 9 0 12" stroke="#888" /></Svg>
        <span className="text-sm leading-5">中</span>
        <span className="ml-1"><SLogo size={16} /></span>
      </div>
      <div className="ml-2 w-[78px] text-center leading-[19px]">13:35<br />2017/7/15</div>
      <button type="button" aria-label="通知" className="ml-1 mr-6 pl-1">
        <Svg size={18} box={18}><path d="M1.500 2.500h15v11H11l-2 2.500-2-2.500H1.500z" stroke="#fff" strokeWidth="1.200" /></Svg>
      </button>
    </div>
  );
}

export default function App() {
  return (
    <div className="flex h-screen flex-col overflow-hidden bg-[#f0f0f0] font-['Noto_Sans','Noto_Sans_CJK_SC',sans-serif] text-xs text-black">
      <TitleBar />
      <MenuBar />
      <ToolbarMain />
      <main className="mb-[3px] mt-0.5 flex min-h-0 flex-1">
        <NavPanel />
        <div className="ml-1.5 flex min-w-0 flex-1 flex-col">
          <ToolbarComponent />
          <div className="flex min-h-0 flex-1">
            <ComponentList />
            <PropertyEditor />
          </div>
        </div>
      </main>
      <StatusBar />
      <TaskBar />
    </div>
  );
}
